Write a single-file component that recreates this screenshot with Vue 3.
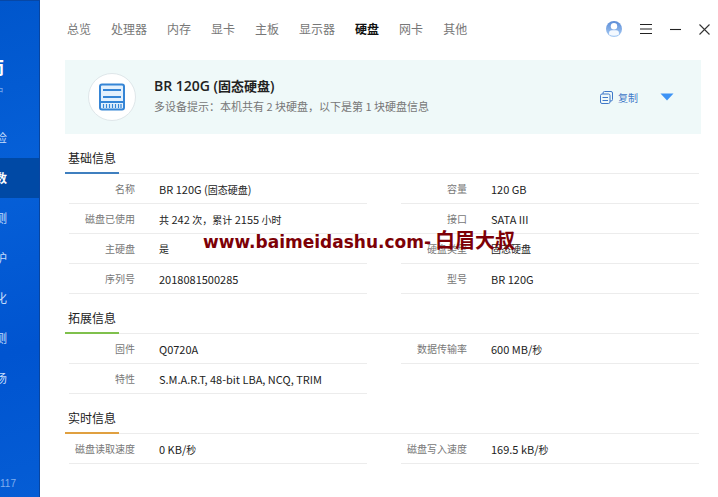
<script setup>
const menu = [
  { name: '检' },
  { name: '数', active: true },
  { name: '测' },
  { name: '护' },
  { name: '化' },
  { name: '测' },
  { name: '场' },
]

const tabs = ['总览', '处理器', '内存', '显卡', '主板', '显示器', '硬盘', '网卡', '其他']
const currentTab = '硬盘'

const sections = [
  {
    title: '基础信息',
    tone: 'blue',
    columns: [
      [
        ['名称', 'BR 120G (固态硬盘)'],
        ['磁盘已使用', '共 242 次，累计 2155 小时'],
        ['主硬盘', '是'],
        ['序列号', '2018081500285'],
      ],
      [
        ['容量', '120 GB'],
        ['接口', 'SATA III'],
        ['硬盘类型', '固态硬盘'],
        ['型号', 'BR 120G'],
      ],
    ],
  },
  {
    title: '拓展信息',
    tone: 'green',
    columns: [
      [
        ['固件', 'Q0720A'],
        ['特性', 'S.M.A.R.T, 48-bit LBA, NCQ, TRIM'],
      ],
      [['数据传输率', '600 MB/秒']],
    ],
  },
  {
    title: '实时信息',
    tone: 'orange',
    columns: [[['磁盘读取速度', '0 KB/秒']], [['磁盘写入速度', '169.5 kB/秒']]],
  },
]

// Latin runs are set one size larger than the Chinese characters around them.
const runs = (text) =>
  (text.match(/[\x20-\x7e]+|[^\x20-\x7e]+/g) || []).map((part) => ({
    part,
    latin: /^[\x20-\x7e]+$/.test(part),
  }))
</script>

<template>
  <div class="app">
    <aside class="sidebar">
      <div class="brand">师</div>
      <div class="slogan">户</div>
      <nav class="menu">
        <a
          v-for="(item, i) in menu"
          :key="i"
          href="#"
          class="menu-item"
          :class="{ active: item.active }"
        >{{ item.name }}</a>
      </nav>
      <div class="version">117</div>
    </aside>

    <main class="main">
      <header class="topbar">
        <nav class="tabs">
          <a
            v-for="tab in tabs"
            :key="tab"
            href="#"
            class="tab"
            :class="{ current: tab === currentTab }"
          >{{ tab }}</a>
        </nav>
        <div class="window-actions">
          <button type="button" class="icon-button" aria-label="账户">
            <svg width="16" height="16" viewBox="0 0 16 16">
              <defs>
                <linearGradient id="avatar-fill" x1="0" y1="0" x2="0" y2="1">
                  <stop offset="0" stop-color="#5a8bd6" />
                  <stop offset="1" stop-color="#a9cdf5" />
                </linearGradient>
              </defs>
              <circle cx="8" cy="8" r="8" fill="url(#avatar-fill)" />
              <circle cx="8" cy="5.200" r="3.200" fill="#fff" />
              <path d="M3 13.600V12.400Q3 9.300 6 9.300H10Q13 9.300 13 12.400V13.600Q8 16 3 13.600Z" fill="#f4f9ff" />
            </svg>
          </button>
          <button type="button" class="icon-button" aria-label="菜单">
            <svg width="12" height="12" viewBox="0 0 12 12">
              <path d="M0 1.500H12M0 6H12M0 10.500H12" stroke="#222" stroke-width="1.200" />
            </svg>
          </button>
          <button type="button" class="icon-button" aria-label="最小化">
            <svg width="11" height="12" viewBox="0 0 11 12">
              <path d="M0 6.500H11" stroke="#222" stroke-width="1.100" />
            </svg>
          </button>
          <button type="button" class="icon-button" aria-label="关闭">
            <svg width="11" height="11" viewBox="0 0 11 11">
              <path d="M.5 .5L10.500 10.500M10.500 .5L.5 10.500" stroke="#333" stroke-width="1.100" />
            </svg>
          </button>
        </div>
      </header>

      <section class="hero">
        <div class="disk-icon">
          <svg width="28" height="28" viewBox="0 0 28 28">
            <rect x="2" y="1.500" width="24" height="25" rx="2" fill="#e4f1fd" stroke="#3585d6" stroke-width="2" />
            <path d="M5 7H23M5 14H23M2 19H26" stroke="#3585d6" stroke-width="2" />
            <path d="M5.500 21V25M8.500 21V25M11.500 21V25M14.500 21V25M17.500 21V25M20.500 21V25M23 21V25" stroke="#3585d6" stroke-width="1.200" />
          </svg>
        </div>
        <div class="hero-text">
          <h1><span class="hero-latin">BR 120G (</span>固态硬盘<span class="hero-latin">)</span></h1>
          <p>多设备提示：本机共有 2 块硬盘，以下是第 1 块硬盘信息</p>
        </div>
        <button type="button" class="copy">
          <svg width="13" height="13" viewBox="0 0 13 13" fill="none" stroke="#3f78c8">
            <path d="M3 3V2Q3 .5 4.500 .5H11Q12.500 .5 12.500 2V8.500Q12.500 10 11 10H10" />
            <rect x=".5" y="3" width="9.500" height="9.500" rx="1.500" />
            <path d="M2.500 6.500H8M2.500 9.500H8" />
          </svg>
          <span>复制</span>
        </button>
        <button type="button" class="icon-button" aria-label="展开">
          <svg width="14" height="8" viewBox="0 0 14 8">
            <path d="M.5 .5H13.500L7 7.500Z" fill="#3d93f5" />
          </svg>
        </button>
      </section>

      <section v-for="section in sections" :key="section.title" class="section">
        <div class="section-head">
          <h2 :class="section.tone">{{ section.title }}</h2>
        </div>
        <div class="columns">
          <dl v-for="(column, c) in section.columns" :key="c" class="column">
            <div v-for="[label, value] in column" :key="label" class="row">
              <dt>{{ label }}</dt>
              <dd><span v-for="(run, r) in runs(value)" :key="r" :class="{ latin: run.latin }">{{ run.part }}</span></dd>
            </div>
          </dl>
        </div>
      </section>
    </main>

    <div class="watermark">www.baimeidashu.com-<span>白眉大叔</span></div>
  </div>
</template>

<style>
body {
  margin: 0;
  background: #fff;
}
</style>

<style scoped>
.app {
  position: relative;
  display: flex;
  min-height: 100vh;
  font-family: "Noto Sans CJK SC", sans-serif;
  color: #222;
  white-space: nowrap;
}
h1, h2, p, dl, dt, dd {
  margin: 0;
}
a {
  color: inherit;
  text-decoration: none;
}
button {
  padding: 0;
  border: 0;
  background: none;
  font: inherit;
  cursor: pointer;
}
svg {
  display: block;
}

.sidebar {
  display: flex;
  flex: 0 0 40px;
  box-sizing: border-box;
  flex-direction: column;
  overflow: hidden;
  border-top: 1px solid #0747a5;
  border-right: 1px solid #0845a0;
  background: linear-gradient(165deg, #0056cc 0%, #0660d8 35%, #0054d0 70%, #055dd5 100%);
  color: #c5dcfa;
}
.brand,
.slogan,
.menu-item {
  display: flex;
  justify-content: flex-end;
}
.brand {
  width: 4px;
  margin-top: 56px;
  font-size: 20px;
  font-weight: 700;
  line-height: 24px;
  color: #fff;
}
.slogan {
  width: 4px;
  font-size: 10px;
  line-height: 20px;
  color: #78a9ec;
}
.menu {
  display: flex;
  flex-direction: column;
  margin-top: 17px;
}
.menu-item {
  padding-right: 32px;
  font-size: 12px;
  line-height: 40px;
}
.menu-item.active {
  background: #0049a5;
  color: #fff;
  font-weight: 700;
}
.version {
  margin-top: auto;
  padding-bottom: 4px;
  font-family: "Liberation Sans", sans-serif;
  font-size: 10px;
  line-height: 18px;
  color: #80aeee;
}

.main {
  display: flex;
  flex: 1;
  flex-direction: column;
  gap: 10px;
  min-width: 0;
  padding: 0 17px 0 25px;
}
.topbar {
  display: flex;
  align-items: center;
  justify-content: space-between;
  height: 50px;
  padding-top: 8px;
  margin: 0 -9px 0 2px;
  box-sizing: border-box;
}
.tabs {
  display: flex;
  gap: 20px;
  font-size: 12px;
  line-height: 20px;
  color: #777;
}
.tab.current {
  color: #111;
  font-weight: 700;
}
.window-actions {
  display: flex;
  align-items: center;
  gap: 18px;
}

.hero {
  display: flex;
  align-items: center;
  height: 74px;
  padding: 0 27px 0 23px;
  box-sizing: border-box;
  background: #eff9f9;
}
.disk-icon {
  display: grid;
  place-items: center;
  flex: none;
  width: 46px;
  height: 46px;
  border: 1px solid #dfe7ea;
  border-radius: 50%;
  background: #fff;
}
.hero-text {
  flex: 1;
  padding: 0 0 2px 18px;
}
.hero-text h1 {
  font-size: 13px;
  font-weight: 700;
  line-height: 20px;
}
.hero-latin {
  font-family: "Open Sans", sans-serif;
  font-size: 14px;
  font-weight: 600;
}
.hero-text p {
  font-size: 11px;
  line-height: 20px;
  color: #777;
}
.copy {
  display: flex;
  align-items: center;
  gap: 5px;
  margin-right: 22px;
  font-size: 10px;
  color: #3f78c8;
}

.section {
  margin-right: 2px;
}
.section-head {
  height: 29px;
  border-bottom: 1px solid #ececec;
}
.section-head h2 {
  display: inline-block;
  padding: 0 3px;
  border-bottom: 2px solid;
  font-size: 12px;
  font-weight: 400;
  line-height: 28px;
}
.section-head .blue {
  border-color: #3f7fbf;
}
.section-head .green {
  border-color: #7fc04c;
}
.section-head .orange {
  border-color: #e0a040;
}
.columns {
  display: grid;
  grid-template-columns: 1fr 1fr;
  gap: 34px;
  padding-left: 4px;
}
.row {
  display: flex;
  gap: 24px;
  height: 29px;
  border-bottom: 1px solid #ececec;
  font-size: 10px;
  line-height: 30px;
}
.row dt {
  flex: 0 0 66px;
  text-align: right;
  color: #777;
}
.latin {
  font-size: 11px;
  white-space: pre;
}

.watermark {
  position: absolute;
  top: 227px;
  left: 203px;
  font-family: "DejaVu Sans", sans-serif;
  font-size: 17px;
  font-weight: 700;
  line-height: 26px;
  color: #7d0006;
}
.watermark span {
  margin-left: 4px;
  font-family: "Noto Sans CJK SC", sans-serif;
  font-size: 20px;
}
</style>
